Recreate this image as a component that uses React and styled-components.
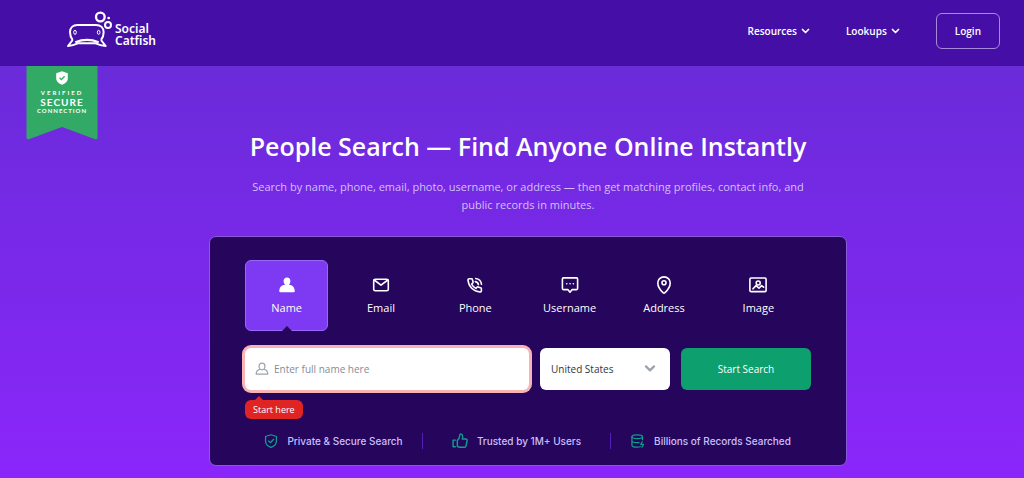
import React, { useState } from "react";
import styled, { createGlobalStyle } from "styled-components";

const GlobalStyle = createGlobalStyle`
  * {
    box-sizing: border-box;
  }

  body {
    margin: 0;
    background: #8b26fb;
    font-family: "Open Sans", "Noto Sans", sans-serif;
    color: #fff;
  }

  button,
  input,
  select {
    font-family: inherit;
  }
`;

const StyledHeader = styled.header`
  display: flex;
  align-items: center;
  justify-content: space-between;
  height: 66px;
  padding: 0 24px 4px 66px;
  background: #450fa7;
`;

const StyledLogo = styled.a`
  display: flex;
  align-items: center;
  padding-bottom: 3px;
  color: #fff;
  text-decoration: none;
`;

const StyledLogoText = styled.span`
  display: flex;
  flex-direction: column;
  padding-top: 10px;
  font-family: "Noto Sans", sans-serif;
  font-size: 12px;
  font-weight: 600;
  line-height: 12px;
`;

const StyledNav = styled.nav`
  display: flex;
  align-items: center;
  gap: 36px;
`;

const StyledNavButton = styled.button`
  display: flex;
  align-items: center;
  gap: 4px;
  padding: 0;
  border: 0;
  background: none;
  color: #fff;
  font-size: 10px;
  font-weight: 600;
`;

const StyledLogin = styled.a`
  padding: 10px 18px;
  border: 1px solid #a78bda;
  border-radius: 6px;
  color: #fff;
  font-size: 10px;
  font-weight: 600;
  line-height: 14px;
  text-decoration: none;
`;

const StyledHero = styled.main`
  position: relative;
  padding: 62px 0 13px 32px;
  background: linear-gradient(#6a2bd9, #8b26fb);
`;

const StyledBanner = styled.div`
  position: absolute;
  top: 0;
  left: 26px;
  width: 72px;
  height: 74px;
`;

const StyledBannerShape = styled.svg`
  position: absolute;
  inset: 0;
`;

const StyledBannerText = styled.div`
  position: relative;
  display: flex;
  flex-direction: column;
  align-items: center;
  padding-top: 5px;
  font-family: Lato, sans-serif;
`;

const StyledBannerLine = styled.span`
  margin-top: ${({ $top }) => $top || 0}px;
  font-size: ${({ $size }) => $size}px;
  font-weight: 700;
  line-height: ${({ $height }) => $height}px;
  letter-spacing: ${({ $spacing }) => $spacing}px;
`;

const StyledTitle = styled.h1`
  margin: 0;
  font-size: 25px;
  font-weight: 600;
  line-height: 36px;
  text-align: center;
`;

const StyledLead = styled.p`
  max-width: 580px;
  margin: 14px auto 22px;
  color: #d6bffa;
  font-size: 11px;
  line-height: 18px;
  text-align: center;
`;

const StyledCard = styled.section`
  max-width: 638px;
  margin: 0 auto;
  padding: 23px 35px 16px;
  border: 1px solid #8a5ad6;
  border-radius: 7px;
  background: #25065c;
`;

const StyledTabs = styled.div`
  display: grid;
  grid-template-columns: repeat(6, 1fr);
  gap: 11px;
  padding-right: 11px;
`;

const StyledTab = styled.button`
  position: relative;
  display: flex;
  flex-direction: column;
  align-items: center;
  gap: 5px;
  height: 71px;
  padding: 15px 0 0;
  border: 1px solid ${({ $active }) => ($active ? "#9a68f8" : "transparent")};
  border-radius: 6px;
  background: ${({ $active }) => ($active ? "#7e3af2" : "none")};
  color: #fff;
  font-size: 11px;
  line-height: 18px;

  &::after {
    content: "";
    display: ${({ $active }) => ($active ? "block" : "none")};
    position: absolute;
    bottom: -1px;
    left: 50%;
    margin-left: -5px;
    border: 5px solid transparent;
    border-top: 0;
    border-bottom-color: #25065c;
  }
`;

const StyledForm = styled.form`
  display: grid;
  grid-template-columns: 1fr 130px 130px;
  gap: 11px;
  height: 42px;
  margin-top: 17px;
`;

const StyledField = styled.div`
  display: flex;
  align-items: center;
  gap: 5px;
  padding-left: 10px;
  border-radius: 6px;
  background: #fff;
  box-shadow: 0 0 0 3px #f8b4b4;
`;

const StyledInput = styled.input`
  flex: 1;
  min-width: 0;
  padding: 0;
  border: 0;
  outline: 0;
  background: none;
  color: #374151;
  font-size: 10px;

  &::placeholder {
    color: #858b99;
    opacity: 1;
  }
`;

const StyledSelectWrapper = styled.div`
  display: grid;
  align-items: center;

  > * {
    grid-area: 1 / 1;
  }

  > svg {
    justify-self: end;
    margin-right: 14px;
    pointer-events: none;
  }
`;

const StyledSelect = styled.select`
  height: 100%;
  padding: 0 11px;
  border: 0;
  border-radius: 6px;
  appearance: none;
  background: #fff;
  color: #303540;
  font-size: 10px;
`;

const StyledSubmit = styled.button`
  border: 0;
  border-radius: 6px;
  background: #0e9f6e;
  color: #fff;
  font-size: 10px;
`;

const StyledHint = styled.label`
  position: relative;
  display: block;
  width: fit-content;
  margin-top: 10px;
  padding: 0 8px;
  border-radius: 6px;
  background: #e02424;
  font-size: 9px;
  line-height: 19px;

  &::before {
    content: "";
    position: absolute;
    top: -4px;
    left: 9px;
    border: 5px solid transparent;
    border-top: 0;
    border-bottom-color: #e02424;
  }
`;

const StyledTrustList = styled.ul`
  display: grid;
  grid-template-columns: 177fr 188fr 201fr;
  margin: 14px 0 0;
  padding: 0;
  list-style: none;
`;

const StyledTrustItem = styled.li`
  display: flex;
  align-items: center;
  justify-content: center;
  gap: 9px;
  color: #cabffd;
  font-family: Inter, sans-serif;
  font-size: 10px;
  font-weight: 500;
  line-height: 15px;
  white-space: nowrap;

  & + & {
    border-left: 1px solid #5521b5;
  }
`;

const Icon = ({ size = 18, stroke = "currentColor", width = 1.6, children }) => (
  <svg
    width={size}
    height={size}
    viewBox="0 0 18 18"
    fill="none"
    stroke={stroke}
    strokeWidth={width}
    strokeLinecap="round"
    strokeLinejoin="round"
    aria-hidden="true"
  >
    {children}
  </svg>
);

const Chevron = ({ size, stroke }) => (
  <Icon size={size} stroke={stroke} width={3.4}>
    <path d="M3 5l6 6 6-6" />
  </Icon>
);

const tabs = [
  {
    name: "Name",
    icon: (
      <g fill="currentColor" stroke="none">
        <path d="M9 1.5c2 0 3.4 1.4 3.4 3.5S11 9.6 9 9.6 5.6 7.2 5.6 5 7 1.5 9 1.5z" />
        <path d="M6.4 8.8h5.2c3.3.6 5 2.8 5.2 6.3 0 .8-.3 1.2-1.1 1.2H2.3c-.8 0-1.1-.4-1.1-1.2.2-3.5 1.9-5.7 5.2-6.3z" />
      </g>
    ),
  },
  {
    name: "Email",
    icon: (
      <>
        <rect x="1.7" y="3.2" width="14.6" height="11.6" rx="1.6" />
        <path d="M2.2 4l6.8 5.2L15.8 4" />
      </>
    ),
  },
  {
    name: "Phone",
    icon: (
      <>
        <path d="M3.2 2.7h2.2c.5 0 .9.3 1 .8l.7 2.5c.1.5 0 .8-.4 1.1L5.6 8c.8 1.8 2.3 3.4 4.3 4.4l1-1.1c.3-.4.7-.5 1.1-.4l2.6.8c.5.1.8.5.8 1v2c0 .8-.6 1.4-1.4 1.3C7.5 15.5 2.4 10.4 2 4c0-.7.5-1.3 1.2-1.3z" />
        <path d="M9.3 5.6c1.7.2 2.9 1.4 3.1 3.1M9.7 2.5c3.2.4 5.4 2.6 5.8 5.8" />
      </>
    ),
  },
  {
    name: "Username",
    icon: (
      <>
        <path d="M2.4 1.9h13.2c.6 0 1 .4 1 1v9.7c0 .6-.4 1-1 1h-4.400L9 16.200l-2.200-2.600H2.400c-.6 0-1-.4-1-1V2.900c0-.6.4-1 1-1z" />
        <path d="M5.7 7.800h.1M9 7.800h.1M12.300 7.800h.1" />
      </>
    ),
  },
  {
    name: "Address",
    icon: (
      <>
        <path d="M9 .9c3.500 0 6.200 2.600 6.200 6.100 0 4.300-3.200 7.800-5.200 9.700-.6.500-1.400.5-2 0C6 14.800 2.800 11.300 2.800 7 2.800 3.500 5.500.9 9 .9z" />
        <circle cx="9" cy="6.800" r="2" />
      </>
    ),
  },
  {
    name: "Image",
    icon: (
      <>
        <rect x=".9" y="2" width="16.200" height="13.600" rx="1.200" />
        <circle cx="9.200" cy="7" r="2" />
        <path d="M4 12.800l3-3.200 3 2.600 2.600-2.600 2 1.600" />
      </>
    ),
  },
];

const trust = [
  {
    text: "Private & Secure Search",
    size: 14,
    icon: (
      <>
        <path d="M9 1l7 2.200v6C16 13 13 15.800 9 17.200 5 15.800 2 13 2 9.200v-6z" />
        <path d="M5.800 8.800l2.400 2.400 4.200-4.400" />
      </>
    ),
  },
  {
    text: "Trusted by 1M+ Users",
    size: 16,
    icon: (
      <>
        <path d="M6 8.200c1.800-1.200 2.600-3 2.800-6 0-.8.500-1.200 1.200-1.200 1.400.2 2 1.400 2 2.800 0 1-.2 2-.5 3h4c1 0 1.700.8 1.500 1.800l-1.200 5.800c-.2 1-.9 1.600-1.900 1.600H9c-1 0-2-.4-3-1z" />
        <path d="M3.800 8H1.200v7.400h2.600" />
      </>
    ),
  },
  {
    text: "Billions of Records Searched",
    size: 14,
    icon: (
      <>
        <ellipse cx="8" cy="3.400" rx="6.800" ry="2.400" />
        <path d="M1.200 3.400v11c0 1.500 3 2.500 6.800 2.500 1.600 0 3-.2 4-.5M14.800 3.400v4M1.200 8.800c0 1.500 3 2.400 6.800 2.400h2.400M14.400 10l-1.800 3.200h3.600L14.200 17" />
      </>
    ),
  },
];

const Logo = () => (
  <StyledLogo href="/">
    <svg
      width="49"
      height="37"
      viewBox="0 0 147 111"
      fill="none"
      stroke="#fff"
      strokeWidth="6"
      strokeLinejoin="round"
      aria-hidden="true"
    >
      <path d="M20 87C14 79 12 71 12 63c0-13 9-21 22-21h56c14 0 23 9 23 22 0 9-3 17-8 23" />
      <path d="M20 87L6 105c12-1 21-4 29-8h54c8 4 17 7 30 8l-14-18" strokeWidth="6" />
      <path d="M28 94c22-9 48-9 70 0" strokeWidth="7" />
      <ellipse cx="27" cy="64" rx="4" ry="6" strokeWidth="3" />
      <ellipse cx="98" cy="64" rx="4" ry="6" strokeWidth="3" />
      <circle cx="103" cy="18" r="13" strokeWidth="7" />
      <circle cx="126" cy="42" r="9" />
      <circle cx="128" cy="21" r="4" fill="#fff" stroke="none" />
    </svg>
    <StyledLogoText>
      <span>Social</span>
      <span>Catfish</span>
    </StyledLogoText>
  </StyledLogo>
);

const Banner = () => (
  <StyledBanner>
    <StyledBannerShape width="72" height="74" viewBox="0 0 72 74" aria-hidden="true">
      <path d="M.5 0h71v71c0 2-1 3-3 2L36 61 3.500 73c-2 1-3 0-3-2z" fill="#33a966" />
    </StyledBannerShape>
    <StyledBannerText>
      <svg width="12" height="14" viewBox="0 0 12 14" fill="none" aria-hidden="true">
        <path d="M6 .3l5.800 2v5C11.800 10.400 9.200 12.800 6 13.800 2.800 12.800.2 10.400.2 7.300v-5z" fill="#fff" />
        <path d="M3.600 6.800l1.800 1.800 3.200-3.400" stroke="#33a966" strokeWidth="1.300" />
      </svg>
      <StyledBannerLine $size={6} $height={8} $spacing={2} $top={4}>
        VERIFIED
      </StyledBannerLine>
      <StyledBannerLine $size={10} $height={10} $spacing={1}>
        SECURE
      </StyledBannerLine>
      <StyledBannerLine $size={6} $height={8} $spacing={1}>
        CONNECTION
      </StyledBannerLine>
    </StyledBannerText>
  </StyledBanner>
);

const App = () => {
  const [active, setActive] = useState("Name");

  return (
    <>
      <GlobalStyle />
      <StyledHeader>
        <Logo />
        <StyledNav>
          <StyledNavButton type="button">
            Resources <Chevron size={9} />
          </StyledNavButton>
          <StyledNavButton type="button">
            Lookups <Chevron size={9} />
          </StyledNavButton>
          <StyledLogin href="/login">Login</StyledLogin>
        </StyledNav>
      </StyledHeader>
      <StyledHero>
        <Banner />
        <StyledTitle>People Search — Find Anyone Online Instantly</StyledTitle>
        <StyledLead>
          Search by name, phone, email, photo, username, or address — then get
          matching profiles, contact info, and public records in minutes.
        </StyledLead>
        <StyledCard>
          <StyledTabs role="tablist">
            {tabs.map(({ name, icon }) => (
              <StyledTab
                key={name}
                type="button"
                role="tab"
                aria-selected={name === active}
                $active={name === active}
                onClick={() => setActive(name)}
              >
                <Icon>{icon}</Icon>
                {name}
              </StyledTab>
            ))}
          </StyledTabs>
          <StyledForm onSubmit={(e) => e.preventDefault()}>
            <StyledField>
              <Icon size={14} stroke="#9ca3af">
                <path d="M9 1.500c2.200 0 3.800 1.600 3.800 3.900S11.200 10 9 10 5.200 7.700 5.200 5.400 6.800 1.500 9 1.500zM5.800 9.400C3.300 10 1.800 11.900 1.500 15.500h15c-.3-3.600-1.800-5.500-4.300-6.100" />
              </Icon>
              <StyledInput id="full-name" placeholder="Enter full name here" />
            </StyledField>
            <StyledSelectWrapper>
              <StyledSelect aria-label="Country">
                <option>United States</option>
              </StyledSelect>
              <Chevron size={12} stroke="#9ca3af" />
            </StyledSelectWrapper>
            <StyledSubmit type="submit">Start Search</StyledSubmit>
          </StyledForm>
          <StyledHint htmlFor="full-name">Start here</StyledHint>
          <StyledTrustList>
            {trust.map(({ text, size, icon }) => (
              <StyledTrustItem key={text}>
                <Icon size={size} stroke="#0e9f8e">
                  {icon}
                </Icon>
                {text}
              </StyledTrustItem>
            ))}
          </StyledTrustList>
        </StyledCard>
      </StyledHero>
    </>
  );
};

export default App;
